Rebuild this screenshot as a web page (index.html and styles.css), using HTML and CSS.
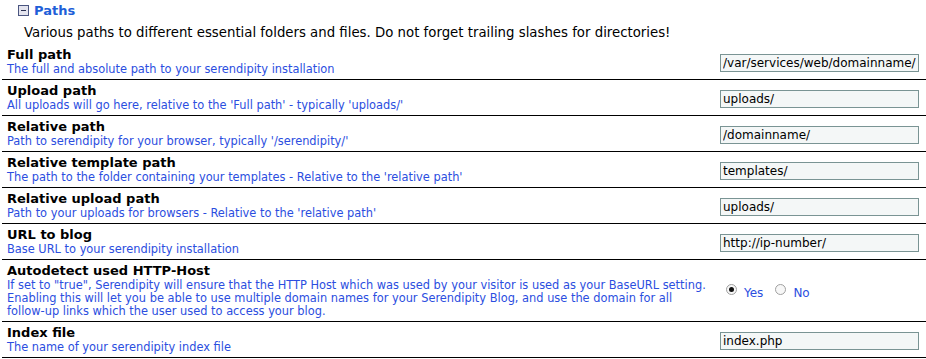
FILE: index.html
```html
<!DOCTYPE html>
<html lang="en">
<head>
  <meta charset="UTF-8">
  <title>Configuration - Paths</title>
  <link rel="stylesheet" href="styles.css">
</head>
<body>

  <div class="config-section">
    <h3 class="section-head"><span class="toggle"></span>Paths</h3>
    <p class="intro">Various paths to different essential folders and files. Do not forget trailing slashes for directories!</p>

    <div class="row">
      <div class="label">
        <strong>Full path</strong>
        <span class="desc">The full and absolute path to your serendipity installation</span>
      </div>
      <div class="control"><input type="text" value="/var/services/web/domainname/"></div>
    </div>

    <div class="row">
      <div class="label">
        <strong>Upload path</strong>
        <span class="desc">All uploads will go here, relative to the 'Full path' - typically 'uploads/'</span>
      </div>
      <div class="control"><input type="text" value="uploads/"></div>
    </div>

    <div class="row">
      <div class="label">
        <strong>Relative path</strong>
        <span class="desc">Path to serendipity for your browser, typically '/serendipity/'</span>
      </div>
      <div class="control"><input type="text" value="/domainname/"></div>
    </div>

    <div class="row">
      <div class="label">
        <strong>Relative template path</strong>
        <span class="desc">The path to the folder containing your templates - Relative to the 'relative path'</span>
      </div>
      <div class="control"><input type="text" value="templates/"></div>
    </div>

    <div class="row">
      <div class="label">
        <strong>Relative upload path</strong>
        <span class="desc">Path to your uploads for browsers - Relative to the 'relative path'</span>
      </div>
      <div class="control"><input type="text" value="uploads/"></div>
    </div>

    <div class="row">
      <div class="label">
        <strong>URL to blog</strong>
        <span class="desc">Base URL to your serendipity installation</span>
      </div>
      <div class="control"><input type="text" value="http://ip-number/"></div>
    </div>

    <div class="row">
      <div class="label">
        <strong>Autodetect used HTTP-Host</strong>
        <span class="desc">If set to "true", Serendipity will ensure that the HTTP Host which was used by your visitor is used as your BaseURL setting. Enabling this will let you be able to use multiple domain names for your Serendipity Blog, and use the domain for all follow-up links which the user used to access your blog.</span>
      </div>
      <div class="control radios">
        <label><input type="radio" name="autodetect" checked> Yes</label>
        <label><input type="radio" name="autodetect"> No</label>
      </div>
    </div>

    <div class="row">
      <div class="label">
        <strong>Index file</strong>
        <span class="desc">The name of your serendipity index file</span>
      </div>
      <div class="control"><input type="text" value="index.php"></div>
    </div>
  </div>

</body>
</html>
```

FILE: styles.css
```css
* {
  box-sizing: border-box;
}

body {
  margin: 0;
  background: #fff;
  font-family: Verdana, "DejaVu Sans", sans-serif;
  color: #000;
}

.config-section {
  padding-left: 2px;
}

.section-head {
  display: flex;
  align-items: center;
  margin: 0;
  padding: 2px 0 0 16px;
  height: 18px;
  font-size: 13px;
  font-weight: bold;
  color: #1e5fd8;
}

.toggle {
  position: relative;
  width: 11px;
  height: 11px;
  margin-right: 5px;
  border: 1px solid #4a5580;
  background: #e4e4ee;
}

.toggle::after {
  content: "";
  position: absolute;
  left: 2px;
  right: 2px;
  top: 4px;
  height: 1px;
  background: #2a3050;
}

.intro {
  margin: 7px 0 3px 22px;
  font-size: 13.3px;
  line-height: 16px;
}

.row {
  display: flex;
  align-items: center;
  border-bottom: 1px solid #000;
  padding: 3px 0 3px;
  min-height: 36px;
}

.label {
  flex: 1;
  padding-left: 5px;
  padding-right: 10px;
}

.label strong {
  display: block;
  font-size: 13px;
  line-height: 16px;
}

.desc {
  display: block;
  font-size: 11.4px;
  line-height: 13px;
  color: #2b4ee0;
}

.control {
  width: 206px;
  padding-right: 8px;
  flex-shrink: 0;
}

.control input[type="text"] {
  width: 199px;
  height: 18px;
  padding: 0 2px;
  border: 1px solid #7a9494;
  background: #f4f7f7;
  font-family: Verdana, "DejaVu Sans", sans-serif;
  font-size: 12px;
  color: #000;
}

.radios {
  display: flex;
  gap: 12px;
  padding-left: 6px;
  padding-top: 4px;
}

.radios label {
  display: flex;
  align-items: center;
  font-size: 12px;
  color: #2b4ee0;
}

.radios input {
  appearance: none;
  -webkit-appearance: none;
  position: relative;
  margin: 0 7px 6px 0;
  width: 11px;
  height: 11px;
  border: 1px solid #a0a0a0;
  border-radius: 50%;
  background: #f7f7f7;
}

.radios input:checked::after {
  content: "";
  position: absolute;
  left: 2px;
  top: 2px;
  width: 5px;
  height: 5px;
  border-radius: 50%;
  background: #111;
}
```
